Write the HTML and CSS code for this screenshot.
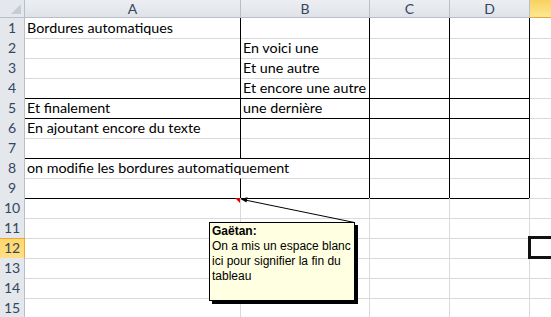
FILE: index.html
```html
<!DOCTYPE html>
<html lang="fr">
<head>
    <meta charset="UTF-8">
    <meta name="viewport" content="width=device-width, initial-scale=1.0">
    <title>Bordures automatiques</title>
    <link rel="stylesheet" href="styles.css">
</head>
<body>
    <div class="sheet">
        <div class="row head">
            <div class="corner"></div>
            <div class="ch">A</div>
            <div class="ch">B</div>
            <div class="ch">C</div>
            <div class="ch">D</div>
            <div class="ch sel"></div>
        </div>

        <div class="row">
            <div class="rh">1</div>
            <div class="c br">Bordures automatiques</div>
            <div class="c br"></div>
            <div class="c br"></div>
            <div class="c br"></div>
            <div class="c"></div>
        </div>
        <div class="row">
            <div class="rh">2</div>
            <div class="c br"></div>
            <div class="c br">En voici une</div>
            <div class="c br"></div>
            <div class="c br"></div>
            <div class="c"></div>
        </div>
        <div class="row">
            <div class="rh">3</div>
            <div class="c br"></div>
            <div class="c br">Et une autre</div>
            <div class="c br"></div>
            <div class="c br"></div>
            <div class="c"></div>
        </div>
        <div class="row">
            <div class="rh">4</div>
            <div class="c br bb"></div>
            <div class="c br bb">Et encore une autre</div>
            <div class="c br bb"></div>
            <div class="c br bb"></div>
            <div class="c"></div>
        </div>
        <div class="row">
            <div class="rh">5</div>
            <div class="c br bb">Et finalement</div>
            <div class="c br bb">une dernière</div>
            <div class="c br bb"></div>
            <div class="c br bb"></div>
            <div class="c"></div>
        </div>
        <div class="row">
            <div class="rh">6</div>
            <div class="c br">En ajoutant encore du texte</div>
            <div class="c br"></div>
            <div class="c br"></div>
            <div class="c br"></div>
            <div class="c"></div>
        </div>
        <div class="row">
            <div class="rh">7</div>
            <div class="c br bb"></div>
            <div class="c br bb"></div>
            <div class="c br bb"></div>
            <div class="c br bb"></div>
            <div class="c"></div>
        </div>
        <div class="row">
            <div class="rh">8</div>
            <div class="c spill">on modifie les bordures automatiquement</div>
            <div class="c br"></div>
            <div class="c br"></div>
            <div class="c br"></div>
            <div class="c"></div>
        </div>
        <div class="row">
            <div class="rh">9</div>
            <div class="c br bb"></div>
            <div class="c br bb"></div>
            <div class="c br bb"></div>
            <div class="c br bb"></div>
            <div class="c"></div>
        </div>
        <div class="row">
            <div class="rh">10</div>
            <div class="c has-note"><span class="note-mark"></span></div>
            <div class="c"></div>
            <div class="c"></div>
            <div class="c"></div>
            <div class="c"></div>
        </div>
        <div class="row">
            <div class="rh">11</div>
            <div class="c"></div>
            <div class="c"></div>
            <div class="c"></div>
            <div class="c"></div>
            <div class="c"></div>
        </div>
        <div class="row">
            <div class="rh sel">12</div>
            <div class="c"></div>
            <div class="c"></div>
            <div class="c"></div>
            <div class="c"></div>
            <div class="c"></div>
        </div>
        <div class="row">
            <div class="rh">13</div>
            <div class="c"></div>
            <div class="c"></div>
            <div class="c"></div>
            <div class="c"></div>
            <div class="c"></div>
        </div>
        <div class="row">
            <div class="rh">14</div>
            <div class="c"></div>
            <div class="c"></div>
            <div class="c"></div>
            <div class="c"></div>
            <div class="c"></div>
        </div>
        <div class="row">
            <div class="rh">15</div>
            <div class="c"></div>
            <div class="c"></div>
            <div class="c"></div>
            <div class="c"></div>
            <div class="c"></div>
        </div>

        <!-- comment arrow, from the note box to cell A10 -->
        <svg class="arrow" width="551" height="317" viewBox="0 0 551 317">
            <line x1="354.5" y1="222.5" x2="245" y2="200" stroke="#000" stroke-width="1"/>
            <polygon points="240.5,199 247.5,197.3 246.5,202.5" fill="#000"/>
        </svg>

        <div class="comment">
            <b>Gaëtan:</b><br>
            On a mis un espace blanc ici pour signifier la fin du tableau
        </div>

        <div class="selection"></div>
    </div>
</body>
</html>
```

FILE: styles.css
```css
body {
    margin: 0;
    background-color: #fff;
    overflow: hidden;
}

.sheet {
    position: relative;
    width: 551px;
    height: 317px;
    overflow: hidden;
    font-family: Lato, "Liberation Sans", sans-serif;
    font-size: 14.3px;
    color: #000;
}

.row {
    display: grid;
    grid-template-columns: 25px 216px 129px 80px 80px 80px;
    height: 20px;
}

.row.head {
    height: 18px;
}

.corner,
.ch,
.rh,
.c {
    box-sizing: border-box;
    border-right: 1px solid #d9d9d9;
    border-bottom: 1px solid #d9d9d9;
}

.corner {
    position: relative;
    background-color: #e4e7eb;
    border-right-color: #b8bfc8;
    border-bottom-color: #b8bfc8;
}

.corner::after {
    content: "";
    position: absolute;
    right: 3px;
    bottom: 3px;
    border-bottom: 10px solid #c6ccd3;
    border-left: 10px solid transparent;
}

.ch {
    background: linear-gradient(#eceef2, #dfe3e8);
    border-right-color: #b8bfc8;
    border-bottom-color: #b8bfc8;
    color: #34465e;
    font-size: 14px;
    text-align: center;
    line-height: 17px;
}

.rh {
    background-color: #e4e7eb;
    border-right-color: #b8bfc8;
    border-bottom-color: #c6ccd3;
    color: #34465e;
    font-size: 14px;
    text-align: center;
    line-height: 20px;
}

.ch.sel {
    background: linear-gradient(#f8d15f, #fde891);
    border-right-color: #f0b13a;
    border-bottom-color: #e9a63a;
}

.rh.sel {
    background: linear-gradient(#ffd766, #ffe088);
    border-right-color: #e9a63a;
    border-bottom-color: #e9a63a;
    box-shadow: inset 0 1px 0 #e9a63a;
}

.c {
    padding-left: 2px;
    white-space: nowrap;
    line-height: 20px;
}

.c.br {
    border-right-color: #000;
}

.c.bb {
    border-bottom-color: #000;
}

.c.spill {
    overflow: visible;
    border-right-color: transparent;
    position: relative;
    z-index: 1;
}

.has-note {
    position: relative;
}

.note-mark {
    position: absolute;
    top: 0;
    right: 0;
    border-top: 5px solid #e00000;
    border-left: 5px solid transparent;
}

.arrow {
    position: absolute;
    left: 0;
    top: 0;
    pointer-events: none;
    z-index: 2;
}

.comment {
    position: absolute;
    left: 209px;
    top: 222px;
    width: 146px;
    height: 79px;
    box-sizing: border-box;
    padding: 1px 2px;
    background-color: #ffffe1;
    border: 1px solid #000;
    box-shadow: 3px 3px 0 #000;
    font-family: "Liberation Sans", Arial, sans-serif;
    font-size: 12px;
    line-height: 15px;
    z-index: 3;
}

.selection {
    position: absolute;
    left: 528px;
    top: 236px;
    width: 40px;
    height: 23px;
    box-sizing: border-box;
    border: 3px solid #111;
    z-index: 2;
}
```
